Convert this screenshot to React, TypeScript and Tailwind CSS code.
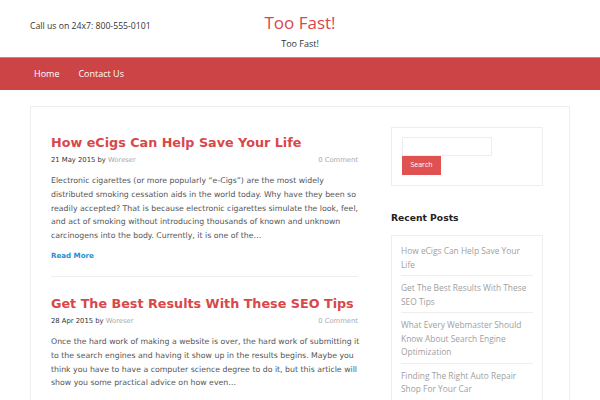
const posts = [
  {
    title: "How eCigs Can Help Save Your Life",
    date: "21 May 2015",
    excerpt:
      "Electronic cigarettes (or more popularly \u201ce-Cigs\u201d) are the most widely distributed smoking cessation aids in the world today. Why have they been so readily accepted? That is because electronic cigarettes simulate the look, feel, and act of smoking without introducing thousands of known and unknown carcinogens into the body. Currently, it is one of the\u2026",
  },
  {
    title: "Get The Best Results With These SEO Tips",
    date: "28 Apr 2015",
    excerpt:
      "Once the hard work of making a website is over, the hard work of submitting it to the search engines and having it show up in the results begins. Maybe you think you have to have a computer science degree to do it, but this article will show you some practical advice on how even\u2026",
  },
];

const recent = [
  "How eCigs Can Help Save Your Life",
  "Get The Best Results With These SEO Tips",
  "What Every Webmaster Should Know About Search Engine Optimization",
  "Finding The Right Auto Repair Shop For Your Car",
];

export default function App() {
  return (
    <div className="w-[600px] h-[400px] overflow-hidden bg-white font-['DejaVu_Sans',sans-serif]">
      <header className="h-[57px] flex items-start px-[30px] relative">
        <p className="mt-[20px] text-[8.7px] text-[#333] font-['Open_Sans',sans-serif]">Call us on 24x7: 800-555-0101</p>
        <div className="absolute left-0 right-0 top-[12px] text-center pointer-events-none font-['Open_Sans',sans-serif]">
          <h1 className="text-[17px] leading-[22px] text-[#d9474a]">Too Fast!</h1>
          <p className="mt-[3px] text-[9px] text-[#333]">Too Fast!</p>
        </div>
      </header>

      <nav className="h-[33px] bg-[#cc4446] border-t border-[#dd7a7a] flex items-center gap-[19px] px-[34px] text-[9px] text-white font-['Open_Sans',sans-serif]">
        <span>Home</span>
        <span>Contact Us</span>
      </nav>

      <div className="mx-[30px] mt-[16px] border border-[#eeeeee] h-[400px] flex pl-[20px] pt-[20px]">
        <main className="w-[307px] mt-[7px]">
          {posts.map((p, i) => (
            <article key={p.title} className={i === 0 ? "pb-[15px] border-b border-[#eeeeee]" : "pt-[18px]"}>
              <h2 className="whitespace-nowrap text-[12.75px] leading-[17px] font-bold text-[#d9474a]">{p.title}</h2>
              <div className="mt-[4px] flex justify-between text-[6.8px] leading-[11px]">
                <span className="text-[#333]">
                  {p.date} by <span className="text-[#aaa]">Woreser</span>
                </span>
                <span className="text-[#aaa]">0 Comment</span>
              </div>
              <p className="mt-[8px] w-[313px] text-[7.8px] leading-[13.8px] text-[#555]">{p.excerpt}</p>
              {i === 0 && <p className="mt-[7px] text-[7.1px] leading-[11px] font-bold text-[#1e8fd6]">Read More</p>}
            </article>
          ))}
        </main>

        <aside className="ml-[33px] w-[152px]">
          <div className="border border-[#eeeeee] pl-[10px] pt-[9px] pb-[10px]">
            <div className="w-[90px] h-[19px] border border-[#eeeeee]" />
            <button className="block w-[39px] h-[19px] bg-[#e05252] text-white text-[7px] font-['Open_Sans',sans-serif]">Search</button>
          </div>
          <h3 className="mt-[26px] text-[9.2px] leading-[12px] font-bold text-[#222]">Recent Posts</h3>
          <ul className="mt-[11px] border border-[#eeeeee] px-[9px] pt-[8px] font-['Open_Sans',sans-serif]">
            {recent.map((r, i) => (
              <li
                key={r}
                className={`text-[8.4px] leading-[13.5px] text-[#a0a0a0] ${i > 0 ? "pt-[5px]" : ""} ${i < recent.length - 1 ? "pb-[4px] border-b border-[#eeeeee]" : "pb-[6px]"}`}
              >
                {r}
              </li>
            ))}
          </ul>
        </aside>
      </div>
    </div>
  );
}
